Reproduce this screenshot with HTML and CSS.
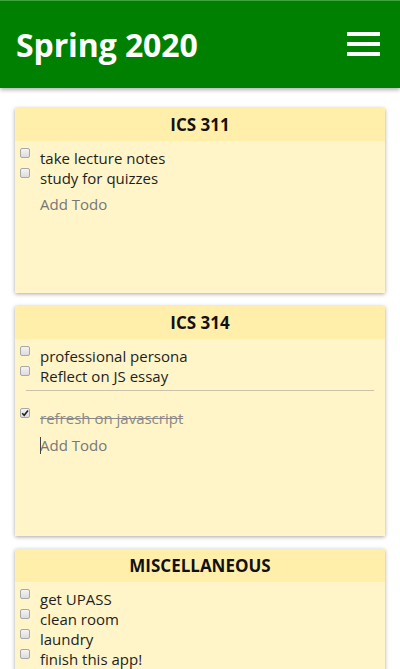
FILE: index.html
```html
<!DOCTYPE html>
<html>
<head>
<meta charset="utf-8">
<link rel="stylesheet" href="styles.css">
</head>
<body>
<header class="topbar">
  <h1 class="title">Spring 2020</h1>
  <div class="burger"><span></span><span></span><span></span></div>
</header>
<main class="board">
  <section class="card">
    <h2 class="card-title">ICS 311</h2>
    <div class="card-body">
      <div class="item"><span class="box"></span><span class="label">take lecture notes</span></div>
      <div class="item"><span class="box"></span><span class="label">study for quizzes</span></div>
      <div class="add">Add Todo</div>
    </div>
  </section>
  <section class="card">
    <h2 class="card-title">ICS 314</h2>
    <div class="card-body">
      <div class="item"><span class="box"></span><span class="label">professional persona</span></div>
      <div class="item"><span class="box"></span><span class="label">Reflect on JS essay</span></div>
      <hr class="divider">
      <div class="item done"><span class="box checked"><svg viewBox="0 0 10 10" width="10" height="10"><path d="M2.2 5.2 L4.2 7.3 L8 2.6" fill="none" stroke="#222" stroke-width="1.6"/></svg></span><span class="label">refresh on javascript</span></div>
      <div class="add focused"><span class="caret"></span>Add Todo</div>
    </div>
  </section>
  <section class="card">
    <h2 class="card-title">MISCELLANEOUS</h2>
    <div class="card-body">
      <div class="item"><span class="box"></span><span class="label">get UPASS</span></div>
      <div class="item"><span class="box"></span><span class="label">clean room</span></div>
      <div class="item"><span class="box"></span><span class="label">laundry</span></div>
      <div class="item"><span class="box"></span><span class="label">finish this app!</span></div>
      <div class="add">Add Todo</div>
    </div>
  </section>
</main>
</body>
</html>
```
FILE: styles.css
```css
html, body {
  margin: 0;
  padding: 0;
  background: #ffffff;
  font-family: "Open Sans", "Noto Sans", sans-serif;
  overflow: hidden;
}
.topbar {
  height: 87px;
  border-top: 1px solid #3fa33f;
  background: #008000;
  display: flex;
  align-items: center;
  justify-content: space-between;
  padding: 0 20px 0 16px;
  box-shadow: 0 2px 4px rgba(0,0,0,0.3);
  position: relative;
  z-index: 2;
}
.title {
  margin: 0;
  color: #ffffff;
  font-size: 32px;
  font-weight: 700;
  letter-spacing: -0.1px;
}
.burger {
  display: flex;
  flex-direction: column;
  gap: 6px;
  margin-top: -2px;
}
.burger span {
  display: block;
  width: 33px;
  height: 4px;
  background: #ffffff;
}
.board {
  padding: 20px 15px;
  display: flex;
  flex-direction: column;
  gap: 13px;
}
.card {
  background: #fff5c9;
  box-shadow: 0 1px 4px rgba(0,0,0,0.35);
}
.card-title {
  margin: 0;
  height: 33px;
  line-height: 34px;
  background: #ffefab;
  text-align: center;
  font-size: 17px;
  font-weight: 700;
  color: #111;
}
.card-body {
  padding: 7px 0 9px 5px;
  font-size: 15px;
  color: #1e1e1e;
}
.item {
  display: flex;
  align-items: flex-start;
  height: 20px;
  line-height: 20px;
}
.box {
  flex: none;
  box-sizing: border-box;
  width: 10px;
  height: 10px;
  border: 1px solid #a8a8a8;
  border-radius: 2px;
  background: linear-gradient(#f4f4f4, #dcdcdc);
  margin-right: 10px;
  display: flex;
  align-items: center;
  justify-content: center;
}
.box svg { display: block; margin: -1px; }
.done .label {
  color: #8a8a8a;
  text-decoration: line-through;
}
.divider {
  border: 0;
  border-top: 1px solid #c9c4a8;
  margin: 4px 11px 17px 6px;
}
.add {
  position: relative;
  margin: 6px 0 0 20px;
  height: 90px;
  line-height: 20px;
  color: #777;
}
.add.focused {
  margin-top: 7px;
  height: 92px;
}
.caret {
  position: absolute;
  left: 0;
  top: 2px;
  width: 1px;
  height: 17px;
  background: #444;
}
```
